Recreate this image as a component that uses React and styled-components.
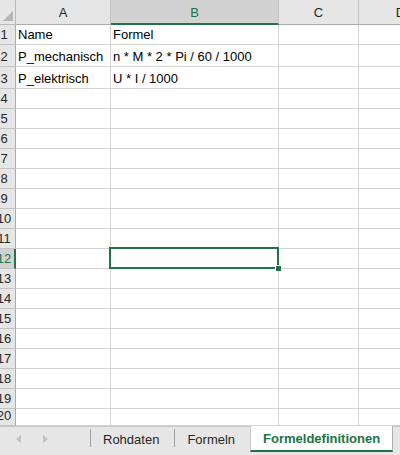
import React from 'react';
import styled, { createGlobalStyle, css } from 'styled-components';

const GREEN = '#217346';

const GlobalStyle = createGlobalStyle`
  html, body {
    margin: 0;
    padding: 0;
    background: #fff;
  }
  body {
    font-family: "Liberation Sans", Arial, sans-serif;
    font-size: 13px;
    color: #000;
  }
`;

const Workbook = styled.div`
  width: 400px;
  height: 455px;
  display: flex;
  flex-direction: column;
  overflow: hidden;
`;

const Sheet = styled.div`
  display: grid;
  grid-template-columns: 16px 95px 168px 80px 84px;
  grid-template-rows: 25px 20px 22px 22px repeat(16, 20px) 17px;
  height: 426px;
  overflow: hidden;
  flex: none;
`;

const Corner = styled.div`
  position: relative;
  background: #e6e6e6;
  border-right: 1px solid #b9b9b9;
  border-bottom: 1px solid #b9b9b9;
  box-sizing: border-box;

  &::after {
    content: '';
    position: absolute;
    right: 2px;
    bottom: 3px;
    width: 0;
    height: 0;
    border-left: 10px solid transparent;
    border-bottom: 10px solid #b6b6b6;
  }
`;

const ColHead = styled.div`
  display: flex;
  align-items: center;
  justify-content: center;
  background: #e6e6e6;
  border-right: 1px solid #c4c4c4;
  border-bottom: 1px solid #ababab;
  box-sizing: border-box;
  color: #262626;
  font-size: 13px;
  padding-top: 1px;

  ${(p) =>
    p.$active &&
    css`
      background: #d2d2d2;
      border-bottom: 2px solid ${GREEN};
      color: ${GREEN};
      padding-top: 2px;
    `}
`;

const RowHead = styled.div`
  display: flex;
  align-items: flex-end;
  overflow: hidden;
  background: #e6e6e6;
  border-right: 1px solid #ababab;
  border-bottom: 1px solid #c4c4c4;
  box-sizing: border-box;
  color: #262626;
  font-size: 13px;

  ${(p) =>
    p.$active &&
    css`
      background: #d2d2d2;
      border-right: 2px solid ${GREEN};
      color: ${GREEN};
    `}
`;

const RowNumber = styled.span`
  flex: none;
  width: 22px;
  margin-left: -7px;
  text-align: center;
  line-height: 15px;
  padding-bottom: 2px;
`;

const Cell = styled.div`
  position: relative;
  display: flex;
  align-items: flex-end;
  border-right: 1px solid #d4d4d4;
  border-bottom: 1px solid #d4d4d4;
  box-sizing: border-box;
  padding: 0 0 2px 2px;
  line-height: 15px;
  white-space: nowrap;
  min-width: 0;
`;

const Selection = styled.div`
  position: absolute;
  left: -2px;
  top: -2px;
  right: -1px;
  bottom: -1px;
  border: 2px solid ${GREEN};
  pointer-events: none;
  z-index: 2;

  &::after {
    content: '';
    position: absolute;
    right: -4px;
    bottom: -4px;
    width: 5px;
    height: 5px;
    background: ${GREEN};
    border-left: 1px solid #fff;
    border-top: 1px solid #fff;
  }
`;

const TabBar = styled.div`
  flex: 1;
  display: flex;
  align-items: flex-start;
  background: #e6e6e6;
  border-top: 1px solid #c6c6c6;
  box-sizing: border-box;
`;

const Nav = styled.div`
  width: 90px;
  height: 24px;
  display: flex;
  align-items: center;
  gap: 22px;
  padding-left: 16px;
  box-sizing: border-box;
`;

const Arrow = styled.span`
  width: 0;
  height: 0;
  border-top: 4px solid transparent;
  border-bottom: 4px solid transparent;
  ${(p) =>
    p.$dir === 'left'
      ? css`border-right: 5px solid #c2c2c2;`
      : css`border-left: 5px solid #c2c2c2;`}
`;

const Divider = styled.span`
  width: 1px;
  height: 18px;
  margin-top: 2px;
  background: #9f9f9f;
`;

const Tab = styled.div`
  height: 22px;
  display: flex;
  align-items: center;
  padding: 0 15px 0 12px;
  color: #262626;
  font-size: 13px;
  margin-top: 1px;

  ${(p) =>
    p.$active &&
    css`
      height: 24px;
      margin-top: -1px;
      padding: 0 12px;
      background: #fff;
      border-left: 1px solid #c6c6c6;
      border-right: 1px solid #b0b0b0;
      border-bottom: 2px solid ${GREEN};
      color: ${GREEN};
      font-weight: bold;
    `}
`;

const columns = ['A', 'B', 'C', 'D'];

const data = {
  1: ['Name', 'Formel'],
  2: ['P_mechanisch', 'n * M * 2 * Pi / 60 / 1000'],
  3: ['P_elektrisch', 'U * I / 1000'],
};

const activeRow = 12;
const activeCol = 'B';

const App = () => {
  const rows = Array.from({ length: 20 }, (_, i) => i + 1);

  return (
    <Workbook>
      <GlobalStyle />
      <Sheet>
        <Corner />
        {columns.map((c) => (
          <ColHead key={c} $active={c === activeCol}>{c}</ColHead>
        ))}
        {rows.map((r) => (
          <React.Fragment key={r}>
            <RowHead $active={r === activeRow}>
              <RowNumber>{r}</RowNumber>
            </RowHead>
            {columns.map((c, ci) => (
              <Cell key={c}>
                {data[r] && data[r][ci]}
                {r === activeRow && c === activeCol && <Selection />}
              </Cell>
            ))}
          </React.Fragment>
        ))}
      </Sheet>
      <TabBar>
        <Nav>
          <Arrow $dir="left" />
          <Arrow $dir="right" />
        </Nav>
        <Divider />
        <Tab>Rohdaten</Tab>
        <Divider />
        <Tab>Formeln</Tab>
        <Tab $active>Formeldefinitionen</Tab>
      </TabBar>
    </Workbook>
  );
};

export default App;
